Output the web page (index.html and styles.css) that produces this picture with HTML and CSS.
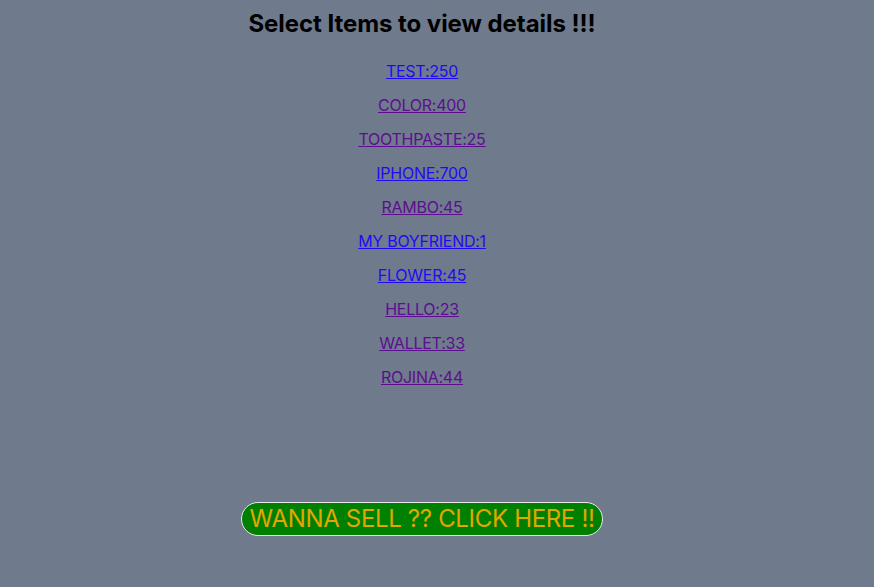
FILE: index.html
```html
<!DOCTYPE html>
<html>
<head>
<meta charset="utf-8">
<link rel="stylesheet" href="styles.css">
</head>
<body>
<div class="page">
  <h1 class="title">Select Items to view details !!!</h1>
  <ul class="items">
    <li><a class="link" href="#">TEST:250</a></li>
    <li><a class="link visited" href="#">COLOR:400</a></li>
    <li><a class="link visited" href="#">TOOTHPASTE:25</a></li>
    <li><a class="link" href="#">IPHONE:700</a></li>
    <li><a class="link visited" href="#">RAMBO:45</a></li>
    <li><a class="link" href="#">MY BOYFRIEND:1</a></li>
    <li><a class="link" href="#">FLOWER:45</a></li>
    <li><a class="link visited" href="#">HELLO:23</a></li>
    <li><a class="link visited" href="#">WALLET:33</a></li>
    <li><a class="link visited" href="#">ROJINA:44</a></li>
  </ul>
  <div class="actions">
    <button class="sell">WANNA SELL ?? CLICK HERE !!</button>
  </div>
</div>
</body>
</html>
```

FILE: styles.css
```css
html, body {
  margin: 0;
  padding: 0;
  background: #6f7a8d;
  height: 100%;
}
body {
  font-family: Inter, "Noto Sans", sans-serif;
}
.page {
  width: 844px;
  display: flex;
  flex-direction: column;
  align-items: center;
  padding-top: 9px;
}
.title {
  margin: 0;
  font-size: 24px;
  font-weight: 700;
  line-height: 29px;
  letter-spacing: -0.06px;
  color: #000;
}
.items {
  list-style: none;
  margin: 24px 0 0;
  padding: 0;
  display: flex;
  flex-direction: column;
  align-items: center;
  gap: 16px;
}
.items li {
  line-height: 18px;
  font-size: 16px;
  letter-spacing: -0.25px;
}
.link {
  color: #1f0af5;
  text-decoration: underline;
}
.link.visited {
  color: #5d0e90;
}
.actions {
  margin-top: 116px;
}
.sell {
  font-family: Inter, "Noto Sans", sans-serif;
  font-size: 24px;
  line-height: 29px;
  letter-spacing: -0.33px;
  color: #e3a600;
  background: #008000;
  border: 1px solid #e8e8e8;
  border-radius: 17px;
  padding: 1px 7px 2px 7px;
  cursor: pointer;
}
```
